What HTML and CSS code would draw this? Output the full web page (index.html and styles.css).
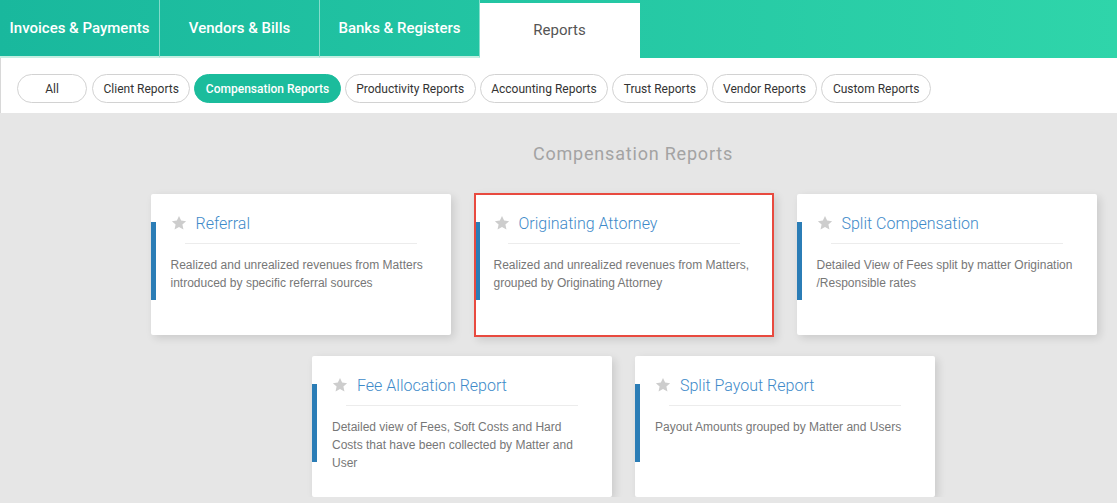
FILE: index.html
```html
<!DOCTYPE html>
<html lang="en">
<head>
  <meta charset="UTF-8" />
  <meta name="viewport" content="width=device-width, initial-scale=1.0"/>
  <title>Reports</title>
  <link rel="stylesheet" href="styles.css">
</head>
<body>
  <header class="topbar">
    <a class="tab" href="#invoices">Invoices &amp; Payments</a>
    <a class="tab" href="#vendors">Vendors &amp; Bills</a>
    <a class="tab" href="#banks">Banks &amp; Registers</a>
    <a class="tab tab-active" href="#reports">Reports</a>
  </header>

  <nav class="filterbar">
    <button class="pill pill-all">All</button>
    <button class="pill">Client Reports</button>
    <button class="pill pill-active">Compensation Reports</button>
    <button class="pill">Productivity Reports</button>
    <button class="pill">Accounting Reports</button>
    <button class="pill">Trust Reports</button>
    <button class="pill">Vendor Reports</button>
    <button class="pill">Custom Reports</button>
  </nav>

  <main class="content">
    <h2 class="section-title">Compensation Reports</h2>

    <div class="cards">
      <div class="card">
        <div class="card-head">
          <svg class="star" viewBox="0 0 24 24"><path d="M12 1.5l3.2 6.9 7.5.8-5.6 5.1 1.6 7.4L12 17.9l-6.7 3.8 1.6-7.4-5.6-5.1 7.5-.8z"/></svg>
          <span class="card-title">Referral</span>
        </div>
        <hr class="card-rule">
        <p class="card-text">Realized and unrealized revenues from Matters introduced by specific referral sources</p>
      </div>

      <div class="card card-selected">
        <div class="card-head">
          <svg class="star" viewBox="0 0 24 24"><path d="M12 1.5l3.2 6.9 7.5.8-5.6 5.1 1.6 7.4L12 17.9l-6.7 3.8 1.6-7.4-5.6-5.1 7.5-.8z"/></svg>
          <span class="card-title">Originating Attorney</span>
        </div>
        <hr class="card-rule">
        <p class="card-text">Realized and unrealized revenues from Matters, grouped by Originating Attorney</p>
      </div>

      <div class="card">
        <div class="card-head">
          <svg class="star" viewBox="0 0 24 24"><path d="M12 1.5l3.2 6.9 7.5.8-5.6 5.1 1.6 7.4L12 17.9l-6.7 3.8 1.6-7.4-5.6-5.1 7.5-.8z"/></svg>
          <span class="card-title">Split Compensation</span>
        </div>
        <hr class="card-rule">
        <p class="card-text">Detailed View of Fees split by matter Origination /Responsible rates</p>
      </div>

      <div class="card">
        <div class="card-head">
          <svg class="star" viewBox="0 0 24 24"><path d="M12 1.5l3.2 6.9 7.5.8-5.6 5.1 1.6 7.4L12 17.9l-6.7 3.8 1.6-7.4-5.6-5.1 7.5-.8z"/></svg>
          <span class="card-title">Fee Allocation Report</span>
        </div>
        <hr class="card-rule">
        <p class="card-text">Detailed view of Fees, Soft Costs and Hard Costs that have been collected by Matter and User</p>
      </div>

      <div class="card">
        <div class="card-head">
          <svg class="star" viewBox="0 0 24 24"><path d="M12 1.5l3.2 6.9 7.5.8-5.6 5.1 1.6 7.4L12 17.9l-6.7 3.8 1.6-7.4-5.6-5.1 7.5-.8z"/></svg>
          <span class="card-title">Split Payout Report</span>
        </div>
        <hr class="card-rule">
        <p class="card-text">Payout Amounts grouped by Matter and Users</p>
      </div>
    </div>
  </main>
</body>
</html>
```

FILE: styles.css
```css
body {
  margin: 0;
  background: #e6e6e6;
  font-family: Roboto, "Liberation Sans", Arial, sans-serif;
}

/* top tabs */
.topbar {
  display: flex;
  height: 58px;
  background: linear-gradient(to right, #19b89d, #2fd5aa);
}

.tab {
  box-sizing: border-box;
  width: 160px;
  height: 58px;
  line-height: 56px;
  border-right: 1px solid rgba(255, 255, 255, 0.45);
  border-bottom: 2px solid #c4efe2;
  color: #fff;
  font-size: 15px;
  font-weight: 500;
  text-align: center;
  text-decoration: none;
}

.tab-active {
  height: 55px;
  margin-top: 3px;
  line-height: 55px;
  border-bottom: none;
  background: #fff;
  color: #555;
  font-weight: 400;
}

/* filter pills */
.filterbar {
  display: flex;
  align-items: center;
  gap: 4px;
  box-sizing: border-box;
  height: 55px;
  padding: 6px 0 0 16px;
  background: #fff;
  border-left: 1px solid #d8d8d8;
}

.pill {
  height: 29px;
  padding: 0 10.5px;
  border: 1px solid #d2d2d2;
  border-radius: 15px;
  background: #fff;
  color: #333;
  font-family: Roboto, sans-serif;
  font-size: 12px;
}

.pill-all {
  min-width: 70px;
  margin-right: 1px;
}

.pill-active {
  background: #1bbc9c;
  border-color: #1bbc9c;
  color: #fff;
  font-weight: 500;
}

/* report cards */
.content {
  margin-left: 130px;
}

.section-title {
  margin: 30px 0 29px;
  padding-left: 19px;
  color: #a3a3a3;
  font-size: 18px;
  font-weight: 400;
  line-height: 22px;
  letter-spacing: 0.8px;
  text-align: center;
}

.cards {
  display: flex;
  flex-wrap: wrap;
  justify-content: center;
  gap: 21px 23px;
}

.card {
  position: relative;
  box-sizing: border-box;
  width: 300px;
  height: 141px;
  padding: 20px;
  background: #fff;
  border-radius: 2px;
  box-shadow: 3px 3px 8px rgba(0, 0, 0, 0.12);
}

.card::before {
  content: "";
  position: absolute;
  left: 0;
  top: 28px;
  width: 5px;
  height: 78px;
  background: #2b7db6;
}

.card-selected {
  height: 144px;
  margin: -1px 0 -2px;
  padding: 19px 18px;
  border: 2px solid #e84a3f;
  border-radius: 0;
}

.card-selected::before {
  top: 27px;
  width: 4px;
}

.card-head {
  display: flex;
  align-items: center;
  gap: 9px;
  height: 18px;
}

.star {
  width: 16px;
  height: 16px;
  fill: #cdcdcd;
}

.card-title {
  color: #3e8ac9;
  font-size: 16px;
  font-weight: 300;
}

.card-rule {
  margin: 11px 14px 0;
  border: none;
  border-top: 1px solid #ececec;
}

.card-text {
  margin: 12px 0 0;
  color: #777;
  font-family: "Liberation Sans", Arial, sans-serif;
  font-size: 12px;
  line-height: 18px;
}
```
